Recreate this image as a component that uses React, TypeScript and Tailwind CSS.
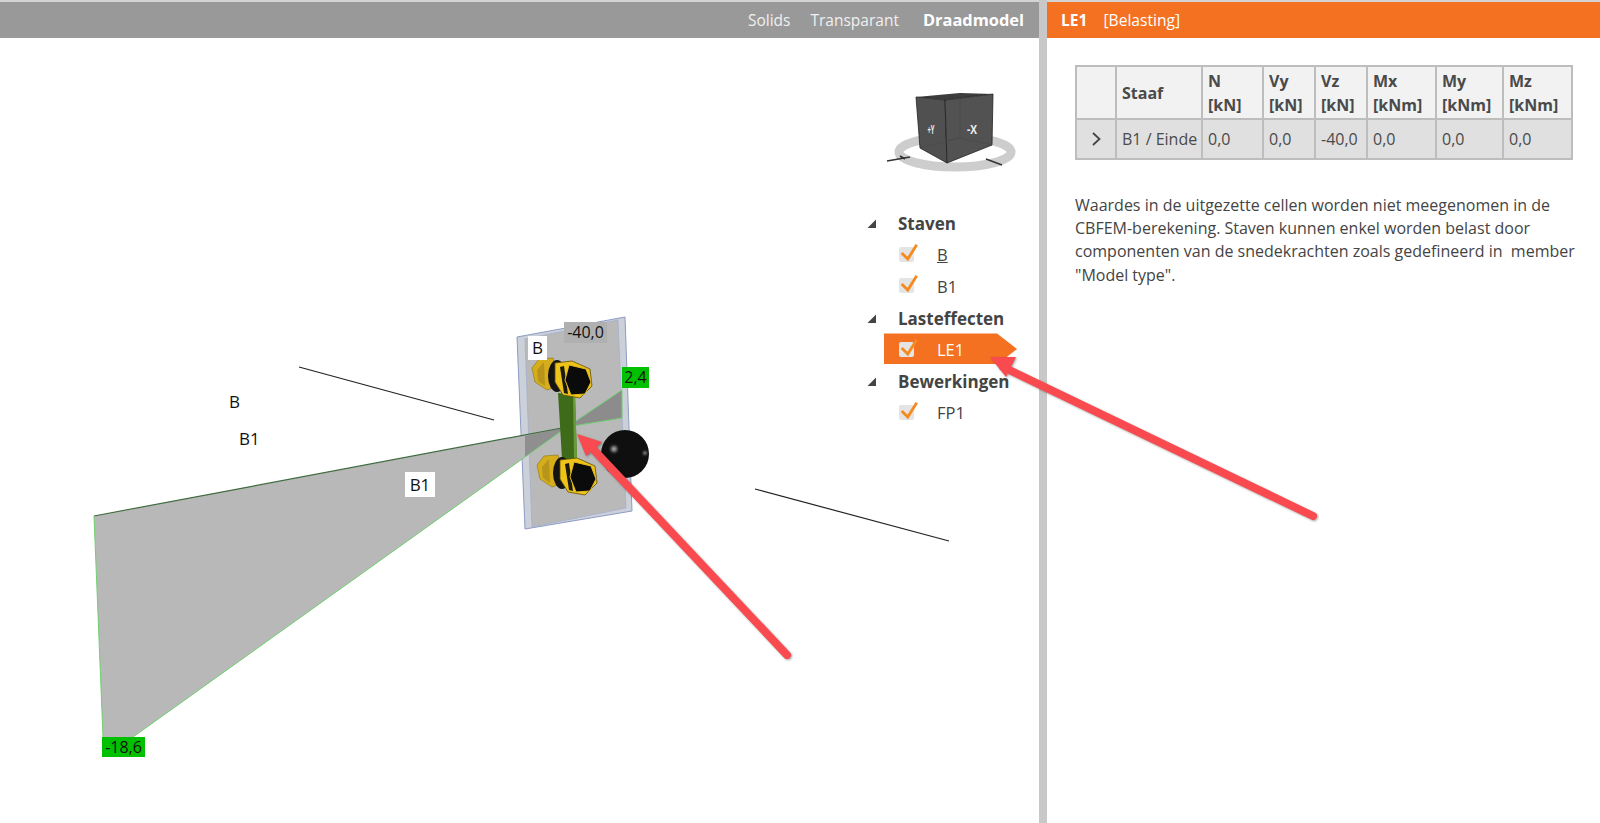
const font = "font-['Open_Sans','Noto_Sans',sans-serif]";

const cols = ["w-[40px]", "w-[86px]", "w-[61px]", "w-[52px]", "w-[52px]", "w-[69px]", "w-[67px]", "w-[69px]"];
const headers = [
  ["N", "[kN]"],
  ["Vy", "[kN]"],
  ["Vz", "[kN]"],
  ["Mx", "[kNm]"],
  ["My", "[kNm]"],
  ["Mz", "[kNm]"],
];
const values = ["0,0", "0,0", "-40,0", "0,0", "0,0", "0,0"];

function Check() {
  return (
    <span className="relative inline-block w-[15px] h-[15px] -mt-[2px] rounded-[2px] bg-[#e4e4e4] shrink-0">
      <svg className="absolute left-0 -top-[4px]" width="20" height="20" viewBox="0 0 20 20" fill="none">
        <path d="M2.7 10 L8.8 16 L17.7 1.7" stroke="#f58a1f" strokeWidth="2.8" />
      </svg>
    </span>
  );
}

function GroupRow({ label }: { label: string }) {
  return (
    <div className="h-[31.6px] flex items-center">
      <svg width="10" height="10" viewBox="0 0 10 10" className="ml-[17px] mr-[21px]">
        <path d="M0.5 9 L9 9 L9 0.5 Z" fill="#444" />
      </svg>
      <span className="text-[17px] font-bold text-[#444] whitespace-nowrap">{label}</span>
    </div>
  );
}

function ItemRow({ label, underline }: { label: string; underline?: boolean }) {
  return (
    <div className="h-[31.6px] flex items-center pl-[49px] text-[#444]">
      <Check />
      <span className={`ml-[23px] text-[16.5px] ${underline ? "underline" : ""}`}>{label}</span>
    </div>
  );
}

function Bolt({ x, y }: { x: number; y: number }) {
  return (
    <g transform={`translate(${x} ${y})`}>
      {/* back nut */}
      <path d="M-45 -12 L-38 -21 L-24 -22 L-18 6 L-30 10 L-42 2 Z" fill="#d6ae1c" stroke="#8a7210" strokeWidth="0.6" />
      <path d="M-40 -10 L-33 -18 L-32 6 L-39 1 Z" fill="#b8941a" />
      <ellipse cx="-20" cy="-4" rx="9" ry="16" fill="#141414" />
      {/* front nut */}
      <path d="M-22 -17 L-5 -19 L13 -11 L15 6 L3 18 L-14 15 L-22 2 Z" fill="#eec31a" stroke="#5f4e08" strokeWidth="0.8" />
      <path d="M-17 -13 L-13 -14 L-9 14 L-13 13 Z" fill="#1a1a10" />
      {/* hex head */}
      <path d="M-8 -15 L9 -11 L14 2 L8 14 L-6 15 L-12 0 Z" fill="#0b0b0b" stroke="#e6bb18" strokeWidth="1" />
    </g>
  );
}

export default function App() {
  return (
    <div className={`relative w-full h-screen overflow-hidden bg-white flex ${font}`}>
      {/* left: 3D view */}
      <div className="flex-1 min-w-0 flex flex-col">
        <div className="h-[38px] border-t-2 border-[#d4d4d4] bg-[#999999] flex items-center justify-end gap-[20px] pr-[15px] pt-[1px] text-[15.5px] text-[#f0f0f0] shrink-0">
          <span>Solids</span>
          <span>Transparant</span>
          <span className="ml-[4px] text-[16.4px] font-bold text-white">Draadmodel</span>
        </div>

        <div className="relative flex-1">
          <svg className="absolute inset-0 w-full h-full" viewBox="0 38 1039 785">
            <line x1="299" y1="367" x2="494" y2="420" stroke="#222" strokeWidth="1.2" />
            <line x1="755" y1="489" x2="949" y2="541" stroke="#222" strokeWidth="1.2" />

            {/* end plate */}
            <path d="M517 337 L625 317 L632 511 L525 529 Z" fill="#ccd0d9" stroke="#8c9cc4" strokeWidth="1" />
            <path d="M525 339 L618 320 L626 508 L532 527 Z" fill="#b9b9b9" stroke="#a4b0cc" strokeWidth="0.8" />

            {/* load triangles */}
            <path d="M94 516 L567 427 L133 737 L103 737 Z" fill="#b8b8b8" />
            <path d="M567 427 L622 390 L622 418 Z" fill="#8c8c8c" />
            <path d="M525 436 L567 427 L525 457 Z" fill="#8f8f8f" />
            <path d="M94 516 L567 427" stroke="#3f6b3f" strokeWidth="1.2" />
            <path d="M94 516 L103 737 M133 737 L567 427 L622 390 L622 418 L567 427" stroke="#70d070" strokeWidth="1" fill="none" />

            {/* web */}
            <path d="M558 393 L575 395 L577 459 L562 459 Q560 425 558 393 Z" fill="#3d6b19" />
            <path d="M573 395 L575 395 L577 459 L574 459 Z" fill="#6b9a3a" />

            <Bolt x={577} y={380} />
            <Bolt x={582} y={477} />

            {/* sphere */}
            <circle cx="625" cy="454" r="24" fill="#0f0f0f" />
            <circle cx="614" cy="449" r="3" fill="#aaa" className="blur-[1.5px]" />
            <circle cx="645" cy="453" r="2" fill="#888" className="blur-[1px]" />

            {/* view cube */}
            <ellipse cx="955" cy="152" rx="56" ry="15" fill="none" stroke="#cdcdcd" strokeWidth="9" />
            <path d="M887 161 L910 157 M900 156 L905 159 M986 159 L1002 165" stroke="#333" strokeWidth="1.6" />
            <path d="M916 97 L960 93 L993 94 L945 100 Z" fill="#3c3c3c" />
            <path d="M916 97 L945 100 L947 163 L920 148 Z" fill="#505050" stroke="#222" strokeWidth="0.8" />
            <path d="M945 100 L993 94 L992 145 L947 163 Z" fill="#525252" stroke="#222" strokeWidth="0.8" />
            <path d="M960 94 L960 138 M946 140 L960 138 L992 145 M920 148 L960 138" stroke="#484848" strokeWidth="0.6" fill="none" />
            <text x="931" y="134" fontSize="12" fontWeight="700" fill="#eee" textAnchor="middle" textLength="7" lengthAdjust="spacingAndGlyphs">+Y</text>
            <text x="972" y="134" fontSize="13" fontWeight="700" fill="#eee" textAnchor="middle" textLength="10" lengthAdjust="spacingAndGlyphs">-X</text>
          </svg>

          {/* diagram labels */}
          <span className="absolute left-[229px] top-[353px] text-[17px] leading-[22px] text-[#111]">B</span>
          <span className="absolute left-[239px] top-[390px] text-[17px] leading-[22px] text-[#111]">B1</span>
          <span className="absolute left-[405px] top-[434px] w-[30px] h-[25px] bg-white text-center text-[17px] leading-[25px] text-[#111]">B1</span>
          <span className="absolute left-[528px] top-[298px] w-[19px] h-[24px] bg-white text-center text-[17px] leading-[24px] text-[#111]">B</span>
          <span className="absolute left-[564px] top-[284px] w-[43px] h-[21px] bg-[#b0b0b0] text-center text-[16px] leading-[21px] text-[#111]">-40,0</span>
          <span className="absolute left-[622px] top-[329px] w-[27px] h-[21px] bg-[#00c000] text-center text-[16px] leading-[21px] text-[#111]">2,4</span>
          <span className="absolute left-[102px] top-[699px] w-[43px] h-[20px] bg-[#00c000] text-center text-[16px] leading-[20px] text-[#111]">-18,6</span>

          {/* model tree */}
          <div className="absolute left-[850px] top-[170px] w-[190px]">
            <GroupRow label="Staven" />
            <ItemRow label="B" underline />
            <ItemRow label="B1" />
            <GroupRow label="Lasteffecten" />
            <div className="relative h-[31.6px] flex items-center pl-[49px] text-white">
              <div className="absolute left-[34px] -top-[1px] w-[133px] h-[31px] bg-[#f47121] [clip-path:polygon(0_0,85%_0,100%_50%,85%_100%,0_100%)]" />
              <span className="relative flex"><Check /></span>
              <span className="relative ml-[23px] text-[16.5px]">LE1</span>
            </div>
            <GroupRow label="Bewerkingen" />
            <ItemRow label="FP1" />
          </div>
        </div>
      </div>

      {/* splitter */}
      <div className="w-[8px] bg-[#c8c8c8] shrink-0" />

      {/* right: detail panel */}
      <div className="w-[553px] shrink-0 flex flex-col">
        <div className="h-[38px] border-t-2 border-[#d4d4d4] bg-[#f47121] flex items-center pl-[14px] pt-[2px] text-[15.6px] text-white shrink-0">
          <span className="font-bold">LE1</span>
          <span className="ml-[16px]">[Belasting]</span>
        </div>

        <div className="pl-[28px] pt-[27px]">
          <table className="table-fixed border-collapse border-2 border-[#b4b4b4] text-[16px] text-[#4a4a4a]">
            <colgroup>
              {cols.map((c, i) => (
                <col key={i} className={c} />
              ))}
            </colgroup>
            <thead>
              <tr className="h-[53px] bg-[#f2f2f2] font-bold text-left leading-[24px]">
                <th className="border-2 border-[#bdbdbd]" />
                <th className="border-2 border-[#bdbdbd] pl-[5px]">Staaf</th>
                {headers.map(([a, b]) => (
                  <th key={a} className="border-2 border-[#bdbdbd] pl-[5px] whitespace-nowrap">
                    {a}
                    <br />
                    {b}
                  </th>
                ))}
              </tr>
            </thead>
            <tbody>
              <tr className="h-[40px] bg-[#e0e0e0]">
                <td className="border-2 border-[#bdbdbd]">
                  <svg width="12" height="16" viewBox="0 0 12 16" className="mx-auto" fill="none">
                    <path d="M3 2 L9.5 8 L3 14" stroke="#444" strokeWidth="1.8" />
                  </svg>
                </td>
                <td className="border-2 border-[#bdbdbd] pl-[5px] whitespace-nowrap">B1 / Einde</td>
                {values.map((v, i) => (
                  <td key={i} className="border-2 border-[#bdbdbd] pl-[5px] whitespace-nowrap">{v}</td>
                ))}
              </tr>
            </tbody>
          </table>

          <p className="mt-[33.5px] w-[520px] text-[16px] leading-[23.4px] text-[#444] whitespace-pre">
            {"Waardes in de uitgezette cellen worden niet meegenomen in de\nCBFEM-berekening. Staven kunnen enkel worden belast door\ncomponenten van de snedekrachten zoals gedefineerd in  member\n\"Model type\"."}
          </p>
        </div>
      </div>

      {/* red annotation arrows */}
      <svg className="absolute inset-0 w-full h-full pointer-events-none [filter:drop-shadow(1px_1px_1px_rgba(0,0,0,0.35))]" viewBox="0 0 1600 823">
        <path d="M787 655 L592 448" stroke="#f94a4f" strokeWidth="8" strokeLinecap="round" />
        <path d="M577 434 L602 442 L586 456 Z" fill="#f94a4f" />
        <path d="M1313 516 L1003 367" stroke="#f94a4f" strokeWidth="8" strokeLinecap="round" />
        <path d="M990 357 L1016 357 L1006 377 Z" fill="#f94a4f" />
      </svg>
    </div>
  );
}
